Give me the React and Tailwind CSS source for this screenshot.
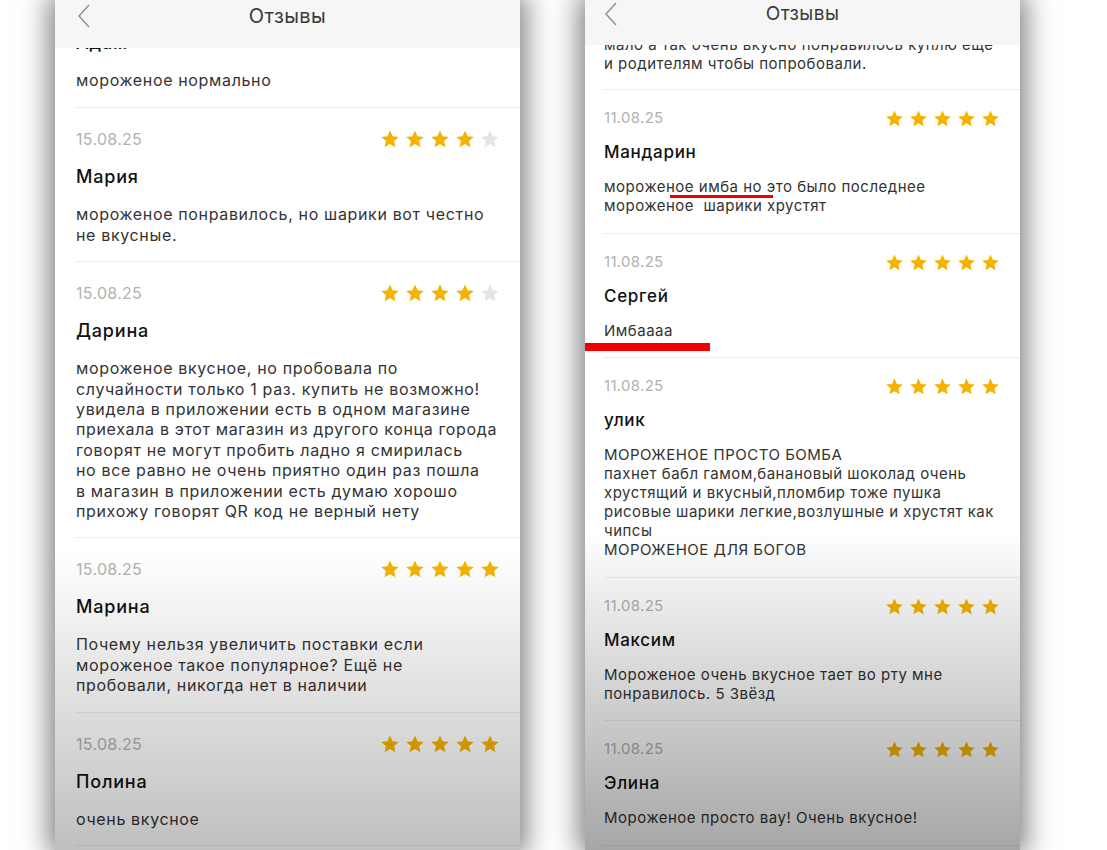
const Star = ({ filled, size }) => (
  <svg width={size} height={size} viewBox="0 0 24 24">
    <path
      d="M12 1.8l3.1 6.9 7.4.8-5.6 5 1.6 7.4L12 18.1l-6.5 3.8 1.6-7.4-5.6-5 7.4-.8z"
      fill={filled ? "#f5b301" : "#e4e4e4"}
    />
  </svg>
);

const Chevron = () => (
  <svg width="14" height="24" viewBox="0 0 14 24" fill="none">
    <path d="M12 1L2 12l10 11" stroke="#8f8f8f" strokeWidth="1.4" />
  </svg>
);

const leftReviews = [
  {
    date: "15.08.25",
    stars: 4,
    name: "Мария",
    lines: ["мороженое понравилось, но шарики вот честно", "не вкусные."],
  },
  {
    date: "15.08.25",
    stars: 4,
    name: "Дарина",
    lines: [
      "мороженое вкусное, но пробовала по",
      "случайности только 1 раз. купить не возможно!",
      "увидела в приложении есть в одном магазине",
      "приехала в этот магазин из другого конца города",
      "говорят не могут пробить ладно я смирилась",
      "но все равно не очень приятно один раз пошла",
      "в магазин в приложении есть думаю хорошо",
      "прихожу говорят QR код не верный нету",
    ],
  },
  {
    date: "15.08.25",
    stars: 5,
    name: "Марина",
    lines: [
      "Почему нельзя увеличить поставки если",
      "мороженое такое популярное? Ещё не",
      "пробовали, никогда нет в наличии",
    ],
  },
  { date: "15.08.25", stars: 5, name: "Полина", lines: ["очень вкусное"] },
];

const rightReviews = [
  {
    date: "11.08.25",
    stars: 5,
    name: "Мандарин",
    lines: ["мороженое имба но это было последнее", "мороженое  шарики хрустят"],
    mark: "text",
  },
  { date: "11.08.25", stars: 5, name: "Сергей", lines: ["Имбаааа"], mark: "edge" },
  {
    date: "11.08.25",
    stars: 5,
    name: "улик",
    lines: [
      "МОРОЖЕНОЕ ПРОСТО БОМБА",
      "пахнет бабл гамом,банановый шоколад очень",
      "хрустящий и вкусный,пломбир тоже пушка",
      "рисовые шарики легкие,возлушные и хрустят как",
      "чипсы",
      "МОРОЖЕНОЕ ДЛЯ БОГОВ",
    ],
  },
  {
    date: "11.08.25",
    stars: 5,
    name: "Максим",
    lines: ["Мороженое очень вкусное тает во рту мне", "понравилось. 5 Звёзд"],
  },
  { date: "11.08.25", stars: 5, name: "Элина", lines: ["Мороженое просто вау! Очень вкусное!"] },
];

const font = { fontFamily: "Inter, 'Noto Sans', sans-serif" };

function LeftPanel() {
  return (
    <div className="relative w-[465px] h-[850px] shrink-0 bg-white overflow-hidden flex flex-col shadow-[0_0_26px_6px_rgba(0,0,0,0.5)]">
      {/* header */}
      <div className="relative z-10 h-[48px] shrink-0 bg-[#f6f6f6] flex items-start">
        <div className="pl-[22px] pt-[4px]">
          <Chevron />
        </div>
        <div className="absolute left-0 right-0 top-[3px] text-center text-[20px] leading-[26px] text-[#3a3a3a] tracking-[0.4px]">
          Отзывы
        </div>
      </div>

      {/* list */}
      <div className="-mt-[17px] flex flex-col text-[#333]">
        <div className="ml-[21px] pr-[20px] pb-[17px]">
          <div className="text-[18px] leading-[24px] font-medium text-[#111] tracking-[0.8px]">Адам</div>
          <div className="mt-[15px] text-[16px] leading-[20.4px] tracking-[0.65px]">мороженое нормально</div>
        </div>
        {leftReviews.map((r, i) => (
          <div key={i} className="ml-[21px] pr-[20px] pt-[21px] pb-[16px] border-t border-[#ececec]">
            <div className="h-[20px] flex items-center justify-between">
              <span className="text-[16px] text-[#b2b2b2] tracking-[0.3px]">{r.date}</span>
              <div className="flex gap-[5px]">
                {[0, 1, 2, 3, 4].map((s) => (
                  <Star key={s} filled={s < r.stars} size={20} />
                ))}
              </div>
            </div>
            <div className="mt-[16px] text-[18px] leading-[24px] font-medium text-[#111] tracking-[0.8px]">
              {r.name}
            </div>
            <div className="mt-[15px] text-[16px] leading-[20.4px] tracking-[0.65px]">
              {r.lines.map((l, j) => (
                <div key={j} className="whitespace-pre">{l}</div>
              ))}
            </div>
          </div>
        ))}
        <div className="ml-[21px] h-[40px] border-t border-[#ececec]" />
      </div>

      {/* bottom shading */}
      <div className="absolute left-0 right-0 bottom-0 h-[300px] bg-gradient-to-b from-transparent to-black/25 pointer-events-none" />
    </div>
  );
}

function RightPanel() {
  return (
    <div className="relative w-[435px] h-[850px] shrink-0 bg-white overflow-hidden flex flex-col shadow-[0_0_26px_6px_rgba(0,0,0,0.5)]">
      <div className="relative z-10 h-[45px] shrink-0 bg-[#f6f6f6] flex items-start">
        <div className="pl-[19px] pt-[2px]">
          <Chevron />
        </div>
        <div className="absolute left-0 right-0 top-[2px] text-center text-[19px] leading-[24px] text-[#3a3a3a] tracking-[0.4px]">
          Отзывы
        </div>
      </div>

      <div className="-mt-[10px] flex flex-col text-[#333]">
        <div className="ml-[19px] pr-[20px] pb-[16px] text-[15px] leading-[19px] tracking-[0.5px]">
          <div>мало а так очень вкусно понравилось куплю еще</div>
          <div>и родителям чтобы попробовали.</div>
        </div>
        {rightReviews.map((r, i) => (
          <div key={i} className="relative ml-[19px] pr-[20px] pt-[19.5px] pb-[17.5px] border-t border-[#ececec]">
            <div className="h-[18px] flex items-center justify-between">
              <span className="text-[15px] text-[#b2b2b2] tracking-[0.3px]">{r.date}</span>
              <div className="flex gap-[5px]">
                {[0, 1, 2, 3, 4].map((s) => (
                  <Star key={s} filled={s < r.stars} size={19} />
                ))}
              </div>
            </div>
            <div className="mt-[13.5px] text-[17px] leading-[22px] font-medium text-[#111] tracking-[0.7px]">
              {r.name}
            </div>
            <div className="relative mt-[14px] text-[15px] leading-[19px] tracking-[0.5px]">
              {r.lines.map((l, j) => (
                <div key={j} className="whitespace-pre">{l}</div>
              ))}
              {r.mark === "text" && (
                <span className="absolute left-[66px] top-[17.5px] w-[103px] h-[3.5px] bg-[#f20000]" />
              )}
            </div>
            {r.mark === "edge" && (
              <span className="absolute -left-[19px] top-[109px] w-[125px] h-[8px] bg-[#f20000]" />
            )}
          </div>
        ))}
        <div className="ml-[19px] h-[40px] border-t border-[#ececec]" />
      </div>

      <div className="absolute left-0 right-0 bottom-0 h-[320px] bg-gradient-to-b from-transparent to-black/35 pointer-events-none" />
    </div>
  );
}

export default function App() {
  return (
    <div className="w-[1107px] h-[850px] bg-white overflow-hidden flex pl-[55px] gap-[65px]" style={font}>
      <LeftPanel />
      <RightPanel />
    </div>
  );
}
